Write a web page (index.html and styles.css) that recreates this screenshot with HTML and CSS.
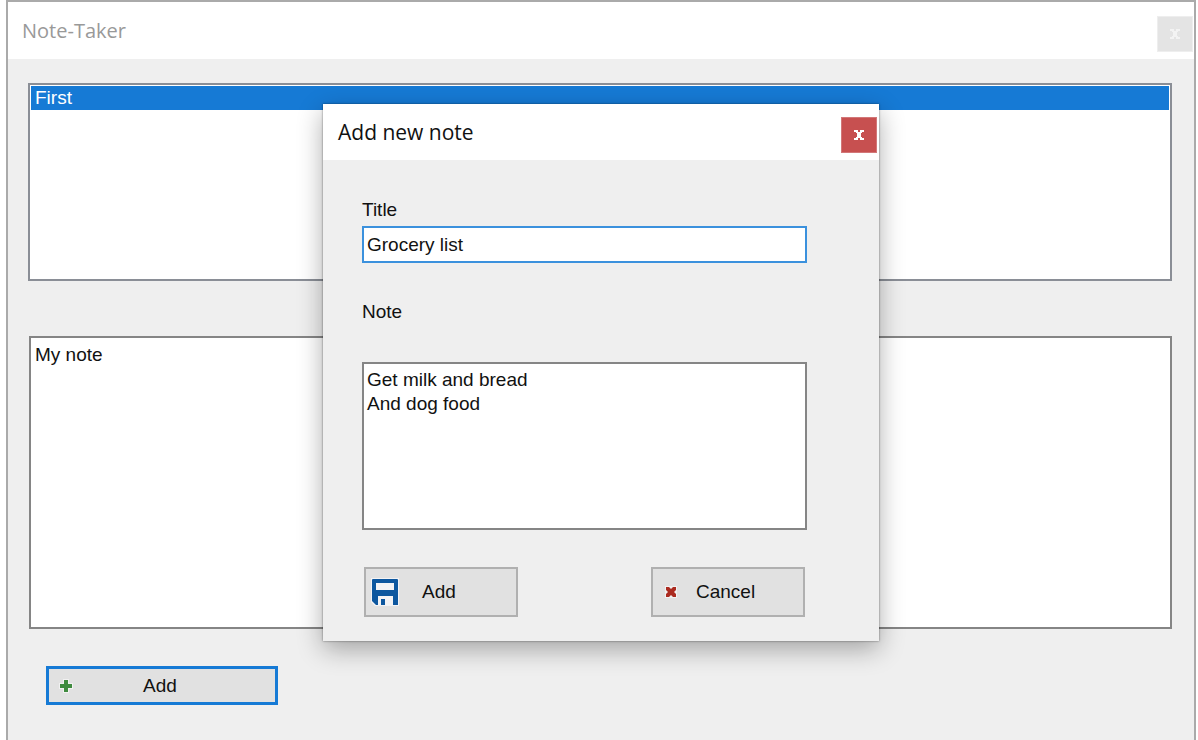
FILE: index.html
```html
<!DOCTYPE html>
<html lang="en">
<head>
<meta charset="utf-8">
<meta name="viewport" content="width=device-width, initial-scale=1">
<title>Note-Taker</title>
<link rel="stylesheet" href="styles.css">
</head>
<body>
<main class="window">
  <header class="titlebar">
    <h1 class="window-title">Note-Taker</h1>
    <button class="close close-inactive" type="button" aria-label="Close Note-Taker">
      <svg class="close-icon" viewBox="0 0 10 10" aria-hidden="true"><path d="M0 0h4v2h2V0h4v2H8v1H7v4h1v1h2v2H6V8H4v2H0V8h2V7h1V3H2V2H0z"/></svg>
    </button>
  </header>
  <div class="window-body">
    <ul class="note-list" role="listbox" aria-label="Notes">
      <li class="note-item" role="option" aria-selected="true">First</li>
    </ul>
    <textarea class="note-view" aria-label="Selected note">My note</textarea>
    <button class="button button-main" type="button">
      <svg class="plus-icon" viewBox="0 0 14 14" aria-hidden="true"><path class="halo" d="M4 0h6v4h4v6h-4v4H4v-4H0V4h4z"/><path fill="#3f8b3f" d="M5 1h4v4h4v4H9v4H5V9H1V5h4z"/></svg>
      <span class="button-label">Add</span>
    </button>
  </div>

  <form class="dialog" role="dialog" aria-labelledby="dialog-title">
    <header class="dialog-bar">
      <h2 class="dialog-title" id="dialog-title">Add new note</h2>
      <button class="close" type="button" aria-label="Close dialog">
        <svg class="close-icon" viewBox="0 0 10 10" aria-hidden="true"><path d="M0 0h4v2h2V0h4v2H8v1H7v4h1v1h2v2H6V8H4v2H0V8h2V7h1V3H2V2H0z"/></svg>
      </button>
    </header>
    <div class="dialog-body">
      <label class="label" for="title">Title</label>
      <input class="field title-field" id="title" type="text" value="Grocery list">
      <label class="label label-note" for="note">Note</label>
      <textarea class="field note-field" id="note">Get milk and bread
And dog food</textarea>
      <div class="actions">
        <button class="button button-save" type="button">
          <svg class="save-icon" viewBox="0 0 28 28" aria-hidden="true"><path fill="#f3f3f5" d="M0 0h28v28H4L0 24z"/><path fill="#0d579f" fill-rule="evenodd" d="M2 1h24a1 1 0 0 1 1 1v25h-5v-9H7v9H5l-4-4V2a1 1 0 0 1 1-1zM5 5v7h18V5z"/><path fill="#0d579f" d="M10 21h4v6h-4z"/></svg>
          <span class="button-label">Add</span>
        </button>
        <button class="button button-cancel" type="button">
          <svg class="cancel-icon" viewBox="0 0 12 12" aria-hidden="true"><path class="halo" d="M0 0h12v12H0z"/><path fill="#ab2b20" d="M1 1h3l2 2 2-2h3v3L9 6l2 2v3H8L6 9l-2 2H1V8l2-2-2-2z"/></svg>
          <span class="button-label">Cancel</span>
        </button>
      </div>
    </div>
  </form>
</main>
</body>
</html>
```
FILE: styles.css
```css
* {
  box-sizing: border-box;
}

body {
  margin: 0;
  background: #fff;
  color: #111;
  font: 19px/24px "Liberation Sans", Arial, sans-serif;
  overflow: hidden;
}

button,
input,
textarea {
  font: inherit;
  color: inherit;
  border-radius: 0;
  outline: 0;
}

.window {
  position: relative;
  margin: 0 2px 0 6px;
  min-height: 101vh;
  border: 2px solid #aaa;
  background: #efefef;
}

.titlebar,
.dialog-bar {
  display: flex;
  align-items: center;
  justify-content: space-between;
  background: #fff;
}

.titlebar {
  height: 57px;
  padding: 6px 1px 0 14px;
}

.window-title,
.dialog-title {
  margin: 0;
  font: 20px/28px "Open Sans", "Noto Sans", sans-serif;
}

.window-title {
  padding-bottom: 6px;
  color: #999;
}

.close {
  display: grid;
  place-items: center;
  width: 36px;
  height: 36px;
  padding: 0;
  border: 1px solid #d27778;
  background: #c75050;
  color: #fff;
}

.close-inactive {
  border-color: #eee;
  background: #e4e4e4;
  color: #f3f3f3;
}

.close-icon {
  width: 10px;
  height: 10px;
  fill: currentColor;
}

.window-body {
  display: flex;
  flex-direction: column;
  align-items: flex-start;
  padding: 24px 22px 34px 20px;
}

.note-list {
  width: 100%;
  height: 198px;
  margin: 0 0 55px;
  padding: 1px;
  border: 2px solid #8a8e96;
  background: #fff;
  list-style: none;
}

.note-item {
  padding-left: 4px;
  background: #167ad5;
  color: #fff;
}

.note-view {
  align-self: stretch;
  height: 293px;
  margin: 0 0 37px 1px;
  padding: 5px 4px;
  border: 2px solid #858585;
  background: #fff;
  resize: none;
}

.button {
  display: flex;
  align-items: center;
  padding: 0;
  border: 2px solid #b0b0b0;
  background: #e1e1e1;
}

.button-main {
  width: 232px;
  height: 39px;
  margin-left: 18px;
  padding-left: 10px;
  gap: 70px;
  border: 3px solid #167ad5;
}

.plus-icon {
  width: 14px;
  height: 14px;
}

.halo {
  fill: #f1f1f1;
}

.dialog {
  position: absolute;
  top: 102px;
  left: 0;
  right: 0;
  width: 556px;
  margin: 0 auto;
  background: #efefef;
  box-shadow: 0 0 2px rgba(0, 0, 0, .5), 0 8px 24px rgba(0, 0, 0, .32);
}

.dialog-bar {
  height: 56px;
  padding: 5px 2px 0 15px;
}

.dialog-title {
  padding-bottom: 5px;
  font-size: 21px;
}

.dialog-body {
  display: flex;
  flex-direction: column;
  padding: 38px 72px 24px 39px;
}

.label {
  margin-bottom: 4px;
}

.field {
  width: 100%;
  padding: 4px 3px;
  border: 2px solid #858585;
  background: #fff;
  resize: none;
}

.title-field {
  height: 37px;
  border-color: #3b91dd;
}

.label-note {
  margin: 37px 0 38px;
}

.note-field {
  height: 168px;
}

.actions {
  display: flex;
  justify-content: space-between;
  padding: 37px 2px 0;
}

.actions .button {
  width: 154px;
  height: 50px;
}

.button-save {
  padding-left: 5px;
  gap: 23px;
}

.save-icon {
  width: 28px;
  height: 28px;
}

.button-cancel {
  padding-left: 12px;
  gap: 19px;
}

.cancel-icon {
  width: 12px;
  height: 12px;
}
```
